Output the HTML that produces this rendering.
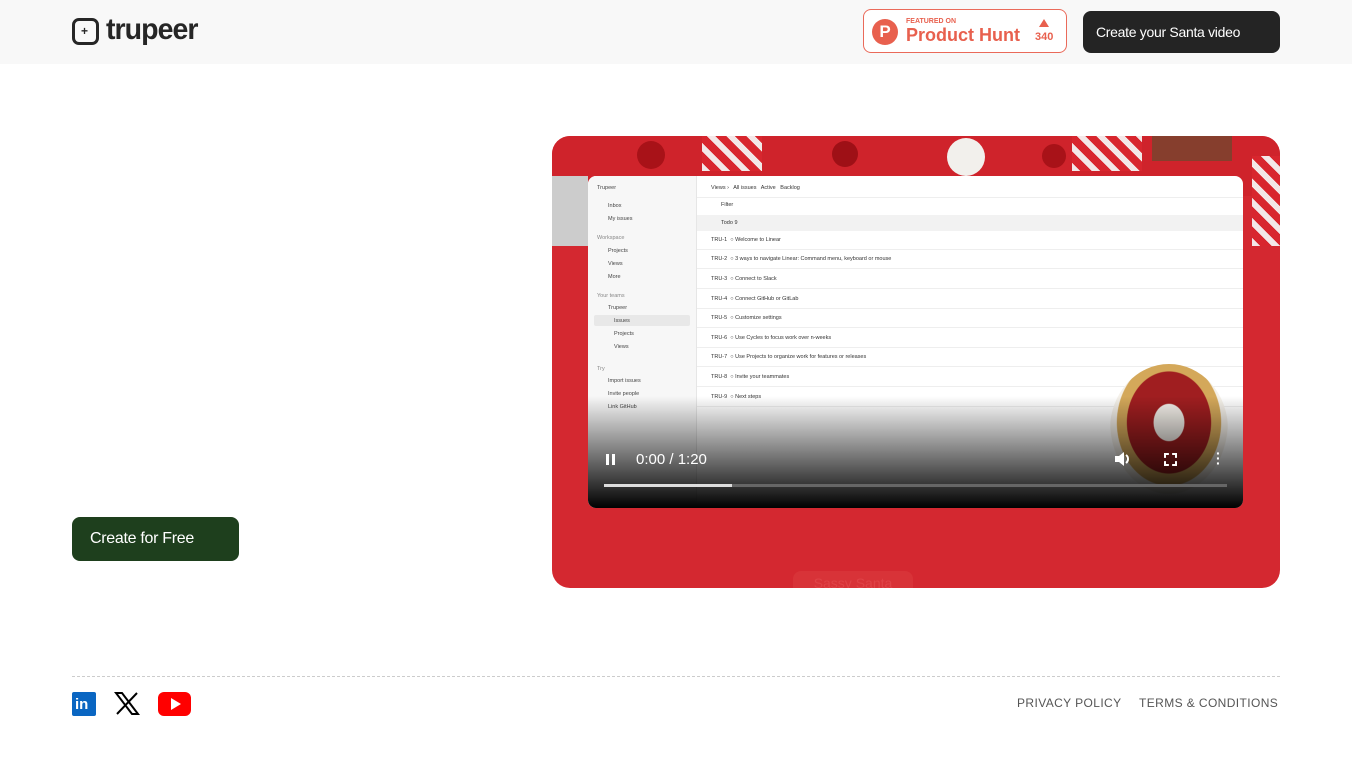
<!DOCTYPE html>
<html><head><meta charset="utf-8"><style>
*{margin:0;padding:0;box-sizing:border-box}
body{width:1352px;height:760px;background:#fff;font-family:"Liberation Sans",sans-serif;position:relative;overflow:hidden}
.hdr{position:absolute;left:0;top:0;width:1352px;height:64px;background:#f8f8f8}
.abs{position:absolute}
.row{position:absolute;left:0;width:546px;height:19px;border-bottom:1px solid #eee;font-size:5.5px;color:#333;display:flex;align-items:center}
</style></head><body>
<div class="hdr">
 <div class="abs" style="left:72px;top:18px;width:27px;height:27px;border:3px solid #262626;border-radius:7px"></div>
 <div class="abs" style="left:81px;top:24px;font-size:12px;color:#262626;font-weight:bold">+</div>
 <div class="abs" style="left:106px;top:13px;font-size:30px;color:#262626;letter-spacing:-1px;font-weight:bold;transform:scaleX(.95);transform-origin:left">trupeer</div>
 <div class="abs" style="left:863px;top:9px;width:204px;height:44px;border:1px solid #ea6a5a;border-radius:8px;background:#fff">
  <div class="abs" style="left:8px;top:9px;width:26px;height:26px;border-radius:50%;background:#e8604e;color:#fff;font-weight:bold;font-size:17px;text-align:center;line-height:26px">P</div>
  <div class="abs" style="left:42px;top:8px;font-size:7px;font-weight:bold;color:#e8604e">FEATURED ON</div>
  <div class="abs" style="left:42px;top:15px;font-size:18px;font-weight:bold;color:#e8604e">Product Hunt</div>
  <div class="abs" style="left:171px;top:21px;font-size:11px;font-weight:bold;color:#e8604e">340</div>
  <div class="abs" style="left:175px;top:9px;width:0;height:0;border-left:5px solid transparent;border-right:5px solid transparent;border-bottom:8px solid #e8604e"></div>
 </div>
 <div class="abs" style="left:1083px;top:11px;width:197px;height:42px;background:#242424;border-radius:8px;color:#fff;font-size:14px;line-height:42px;padding-left:13px;letter-spacing:-.3px">Create your Santa video</div>
</div>

<div class="abs" style="left:72px;top:517px;width:167px;height:44px;background:#1e3f1d;border-radius:8px;color:#fff;font-size:16px;line-height:44px;padding-left:18px;letter-spacing:-.3px">Create for Free</div>

<div class="abs" style="left:552px;top:136px;width:728px;height:452px;border-radius:18px;overflow:hidden;background:#d42830">
 <div class="abs" style="left:0;top:0;width:728px;height:60px;background:#cf232b"></div>
 <div class="abs" style="left:85px;top:5px;width:28px;height:28px;border-radius:50%;background:#a81218"></div>
 <div class="abs" style="left:395px;top:2px;width:38px;height:38px;border-radius:50%;background:#f2f0ec"></div>
 <div class="abs" style="left:280px;top:5px;width:26px;height:26px;border-radius:50%;background:#9e1016"></div>
 <div class="abs" style="left:490px;top:8px;width:24px;height:24px;border-radius:50%;background:#a81218"></div>
 <div class="abs" style="left:150px;top:0;width:60px;height:35px;background:repeating-linear-gradient(45deg,#f3e8e8 0 6px,#d8262e 6px 14px)"></div>
 <div class="abs" style="left:520px;top:0;width:70px;height:35px;background:repeating-linear-gradient(45deg,#f3e8e8 0 6px,#d8262e 6px 14px)"></div>
 <div class="abs" style="left:600px;top:0;width:80px;height:25px;background:#3d5a30;opacity:.5"></div>
 <div class="abs" style="left:0;top:40px;width:36px;height:70px;background:#ccc"></div>
 <div class="abs" style="left:700px;top:20px;width:28px;height:90px;background:repeating-linear-gradient(45deg,#f3e8e8 0 6px,#d8262e 6px 14px)"></div>
 <div class="abs" style="left:241px;top:435px;width:120px;height:24px;border-radius:8px;background:#d83338;color:#df4347;font-size:14px;line-height:24px;text-align:center">Sassy Santa</div>

 <div class="abs" style="left:36px;top:40px;width:655px;height:332px;border-radius:8px;overflow:hidden;background:#fff">
  <div class="abs" style="left:0;top:0;width:109px;height:332px;background:#f7f7f7;border-right:1px solid #e6e6e6;font-size:5.5px;color:#444">
   <div class="abs" style="left:9px;top:9px">Trupeer</div>
   <div class="abs" style="left:20px;top:27px">Inbox</div>
   <div class="abs" style="left:20px;top:40px">My issues</div>
   <div class="abs" style="left:9px;top:59px;color:#888">Workspace</div>
   <div class="abs" style="left:20px;top:72px">Projects</div>
   <div class="abs" style="left:20px;top:85px">Views</div>
   <div class="abs" style="left:20px;top:98px">More</div>
   <div class="abs" style="left:9px;top:117px;color:#888">Your teams</div>
   <div class="abs" style="left:20px;top:129px">Trupeer</div>
   <div class="abs" style="left:6px;top:139px;width:96px;height:11px;background:#e8e8e8;border-radius:2px"></div>
   <div class="abs" style="left:26px;top:142px">Issues</div>
   <div class="abs" style="left:26px;top:155px">Projects</div>
   <div class="abs" style="left:26px;top:168px">Views</div>
   <div class="abs" style="left:9px;top:190px;color:#888">Try</div>
   <div class="abs" style="left:20px;top:202px">Import issues</div>
   <div class="abs" style="left:20px;top:215px">Invite people</div>
   <div class="abs" style="left:20px;top:228px">Link GitHub</div>
  </div>
  <div class="abs" style="left:109px;top:0;width:546px;height:332px;font-size:5.5px;color:#333">
   <div class="abs" style="left:14px;top:9px">Views › &nbsp; All issues &nbsp; Active &nbsp; Backlog</div>
   <div class="abs" style="left:0;top:21px;width:546px;border-top:1px solid #eee"></div>
   <div class="abs" style="left:24px;top:26px">Filter</div>
   <div class="abs" style="left:0;top:39px;width:546px;height:16px;background:#f2f2f2"></div>
   <div class="abs" style="left:24px;top:44px">Todo 9</div>
   <div class="row" style="top:55px;padding-left:14px">TRU-1 &nbsp;○ Welcome to Linear</div>
   <div class="row" style="top:74px;padding-left:14px">TRU-2 &nbsp;○ 3 ways to navigate Linear: Command menu, keyboard or mouse</div>
   <div class="row" style="top:94px;padding-left:14px">TRU-3 &nbsp;○ Connect to Slack</div>
   <div class="row" style="top:114px;padding-left:14px">TRU-4 &nbsp;○ Connect GitHub or GitLab</div>
   <div class="row" style="top:133px;padding-left:14px">TRU-5 &nbsp;○ Customize settings</div>
   <div class="row" style="top:153px;padding-left:14px">TRU-6 &nbsp;○ Use Cycles to focus work over n-weeks</div>
   <div class="row" style="top:172px;padding-left:14px">TRU-7 &nbsp;○ Use Projects to organize work for features or releases</div>
   <div class="row" style="top:192px;padding-left:14px">TRU-8 &nbsp;○ Invite your teammates</div>
   <div class="row" style="top:212px;padding-left:14px">TRU-9 &nbsp;○ Next steps</div>
  </div>
  <div class="abs" style="left:522px;top:188px;width:118px;height:130px;border-radius:50% 50% 10px 10px;background:radial-gradient(ellipse at 50% 45%,#f3efe9 0 18%,#a01e20 19% 50%,#d4a85a 51% 62%,#f5f1ea 63% 70%,transparent 71%)"></div>
  <div class="abs" style="left:0;top:220px;width:655px;height:112px;background:linear-gradient(rgba(0,0,0,0),rgba(0,0,0,.55) 55%,#000)"></div>
  <div class="abs" style="left:18px;top:278px;width:3px;height:11px;background:#fff"></div>
  <div class="abs" style="left:24px;top:278px;width:3px;height:11px;background:#fff"></div>
  <div class="abs" style="left:48px;top:275px;color:#fff;font-size:15px">0:00 / 1:20</div>
  <svg class="abs" style="left:526px;top:275px" width="18" height="16" viewBox="0 0 18 16"><path d="M1 5h4l5-4v14l-5-4H1z" fill="#fff"/><path d="M12 4a5 5 0 010 8" stroke="#fff" stroke-width="2" fill="none"/></svg>
  <div class="abs" style="left:576px;top:277px;width:13px;height:13px;border:2px dashed #fff"></div>
  <div class="abs" style="left:628px;top:275px;color:#fff;font-size:14px;font-weight:bold;line-height:5px">·<br>·<br>·</div>
  <div class="abs" style="left:16px;top:308px;width:623px;height:3px;background:#666"></div>
  <div class="abs" style="left:16px;top:308px;width:128px;height:3px;background:#ddd"></div>
 </div>
</div>

<div class="abs" style="left:72px;top:676px;width:1208px;border-top:1px dashed #ccc"></div>
<div class="abs" style="left:72px;top:692px;width:24px;height:24px;background:#0a66c2;border-radius:2px;color:#fff;font-weight:bold;font-size:15px;line-height:26px;padding-left:3px">in</div>
<svg class="abs" style="left:114px;top:692px" width="26" height="23" viewBox="0 0 26 23"><path d="M2 1h6l16 21h-6z" fill="none" stroke="#000" stroke-width="2"/><path d="M23 1L3 22" stroke="#000" stroke-width="2"/></svg>
<div class="abs" style="left:158px;top:692px;width:33px;height:24px;background:#f00;border-radius:6px"></div>
<div class="abs" style="left:171px;top:698px;width:0;height:0;border-top:6px solid transparent;border-bottom:6px solid transparent;border-left:10px solid #fff"></div>
<div class="abs" style="left:1017px;top:696px;font-size:12px;color:#555;letter-spacing:.4px">PRIVACY POLICY</div>
<div class="abs" style="left:1139px;top:696px;font-size:12px;color:#555;letter-spacing:.4px">TERMS &amp; CONDITIONS</div>
</body></html>
